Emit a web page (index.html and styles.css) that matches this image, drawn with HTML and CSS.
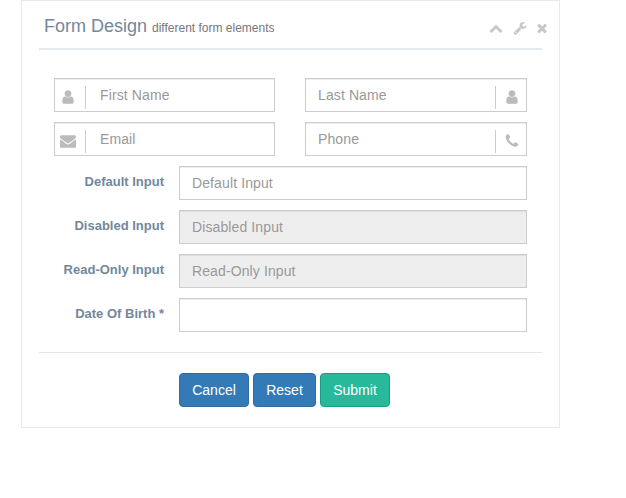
FILE: index.html
```html
<!DOCTYPE html>
<html lang="en">
<head>
<meta charset="utf-8">
<title>Form Design</title>
<link rel="stylesheet" href="styles.css">
</head>
<body>
<svg class="sprite" aria-hidden="true">
  <symbol id="user" viewBox="0 0 1792 1792"><path d="M1536 1399q0 109-62.5 187t-150.5 78h-854q-88 0-150.5-78t-62.5-187q0-85 8.5-160.5t31.5-152 58.5-131 94-89 134.5-34.5q131 128 313 128t313-128q76 0 134.5 34.5t94 89 58.5 131 31.5 152 8.5 160.5zm-256-887q0 159-112.5 271.5t-271.5 112.5-271.5-112.5-112.5-271.5 112.5-271.5 271.5-112.5 271.5 112.5 112.5 271.5z"/></symbol>
  <symbol id="envelope" viewBox="0 0 1792 1792"><path d="M1792 710v794q0 66-47 113t-113 47h-1472q-66 0-113-47t-47-113v-794q44 49 101 87 362 246 497 345 57 42 92.5 65.5t94.5 48 110 24.5h2q51 0 110-24.5t94.5-48 92.5-65.5q170-123 498-345 57-39 100-87zm0-294q0 79-49 151t-122 123q-376 261-468 325-10 7-42.5 31t-54 38.5-52 32.5-57.5 27-50 9h-2q-23 0-50-9t-57.5-27-52-32.5-54-38.5-42.5-31q-91-64-262-182.5t-205-142.5q-62-42-117-115.5t-55-136.5q0-78 41.5-130t118.5-52h1472q65 0 112.5 47t47.5 113z"/></symbol>
  <symbol id="phone" viewBox="0 0 1792 1792"><path d="M1600 1240q0 27-10 70.5t-21 68.5q-21 50-122 106-94 51-186 51-27 0-53-3.5t-57.5-12.5-47-14.5-55.5-20.5-49-18q-98-35-175-83-127-79-264-216t-216-264q-48-77-83-175-3-9-18-49t-20.5-55.5-14.5-47-12.5-57.5-3.5-53q0-92 51-186 56-101 106-122 25-11 68.5-21t70.5-10q14 0 21 3 18 6 53 76 11 19 30 54t35 63.5 31 53.5q3 4 17.5 25t21.5 35.5 7 28.5q0 20-28.5 50t-62 55-62 53-28.5 46q0 9 5 22.5t8.5 20.5 14 24 11.5 19q76 137 174 235t235 174q2 1 19 11.5t24 14 20.5 8.5 22.5 5q18 0 46-28.5t53-62 55-62 50-28.5q14 0 28.5 7t35.5 21.5 25 17.5q25 15 53.5 31t63.5 35 54 30q70 35 76 53 3 7 3 21z"/></symbol>
  <symbol id="chevron" viewBox="0 0 1792 1792"><path d="M1683 1331l-166 165q-19 19-45 19t-45-19l-531-531-531 531q-19 19-45 19t-45-19l-166-165q-19-19-19-45.5t19-45.5l742-741q19-19 45-19t45 19l742 741q19 19 19 45.5t-19 45.5z"/></symbol>
  <symbol id="wrench" viewBox="0 0 1792 1792"><path d="M448 1472q0-26-19-45t-45-19-45 19-19 45 19 45 45 19 45-19 19-45zm644-420l-682 682q-37 37-90 37-52 0-91-37l-106-108q-38-36-38-90 0-53 38-91l681-681q39 98 114.5 173.5t173.5 114.5zm634-435q0 39-23 106-47 134-164.5 217.5t-258.5 83.5q-185 0-316.5-131.5t-131.5-316.5 131.5-316.5 316.5-131.5q58 0 121.5 16.5t107.5 46.5q16 11 16 28t-16 28l-293 169v224l193 107q5-3 79-48.5t135.5-81 70.5-35.5q15 0 23.5 10t8.5 25z"/></symbol>
  <symbol id="close" viewBox="0 0 1792 1792"><path d="M1490 1322q0 40-28 68l-136 136q-28 28-68 28t-68-28l-294-294-294 294q-28 28-68 28t-68-28l-136-136q-28-28-28-68t28-68l294-294-294-294q-28-28-28-68t28-68l136-136q28-28 68-28t68 28l294 294 294-294q28-28 68-28t68 28l136 136q28 28 28 68t-28 68l-294 294 294 294q28 28 28 68z"/></symbol>
</svg>
<section class="panel">
  <header class="panel-title">
    <h2>Form Design <small>different form elements</small></h2>
    <div class="toolbox">
      <svg class="tool"><use href="#chevron"/></svg>
      <svg class="tool"><use href="#wrench"/></svg>
      <svg class="tool"><use href="#close"/></svg>
    </div>
  </header>
  <form class="form">
    <div class="pair">
      <div class="field"><input class="control has-left" type="text" placeholder="First Name"><span class="feedback left"><svg><use href="#user"/></svg></span></div>
      <div class="field"><input class="control" type="text" placeholder="Last Name"><span class="feedback right"><svg><use href="#user"/></svg></span></div>
    </div>
    <div class="pair">
      <div class="field"><input class="control has-left" type="text" placeholder="Email"><span class="feedback left"><svg><use href="#envelope"/></svg></span></div>
      <div class="field"><input class="control" type="text" placeholder="Phone"><span class="feedback right"><svg><use href="#phone"/></svg></span></div>
    </div>
    <div class="row"><label for="default">Default Input</label><input id="default" class="control" type="text" placeholder="Default Input"></div>
    <div class="row"><label for="disabled">Disabled Input</label><input id="disabled" class="control" type="text" placeholder="Disabled Input" disabled></div>
    <div class="row"><label for="readonly">Read-Only Input</label><input id="readonly" class="control" type="text" placeholder="Read-Only Input" readonly></div>
    <div class="row"><label for="birth">Date Of Birth *</label><input id="birth" class="control" type="text"></div>
  </form>
  <div class="actions">
    <button class="btn" type="button">Cancel</button>
    <button class="btn reset" type="reset">Reset</button>
    <button class="btn success" type="submit">Submit</button>
  </div>
</section>
</body>
</html>
```

FILE: styles.css
```css
* { box-sizing: border-box; }
body {
  margin: 0;
  background: #fff;
  color: #73879c;
  font: 13px/18px "Liberation Sans", Arial, sans-serif;
}
.sprite { display: none; }
.panel {
  width: 539px;
  height: 428px;
  margin-left: 21px;
  padding: 0 17px;
  border: 1px solid #e6e9ed;
}
.panel-title {
  display: flex;
  justify-content: space-between;
  height: 49px;
  padding: 15px 0 0 5px;
  border-bottom: 2px solid #e6e9ed;
}
h2 { margin: 0; font-size: 18px; font-weight: 400; line-height: 20px; }
h2 small { font-size: 12px; color: #777; }
.toolbox { display: flex; gap: 9px; padding: 4.5px 0 0; margin-right: -6.5px; }
.tool { width: 14px; height: 14px; fill: #c5c7cb; }
.tool:nth-child(2) { margin-left: 1px; }
.tool:nth-child(3) { margin-left: -1px; }
.form {
  display: flex;
  flex-direction: column;
  gap: 10px;
  padding: 28px 15px 20px;
  border-bottom: 1px solid #e5e5e5;
}
.pair { display: grid; grid-template-columns: 221px 222px; gap: 30px; }
.field { position: relative; }
.control {
  display: block;
  width: 100%;
  height: 34px;
  padding: 6px 12px;
  border: 1px solid #ccc;
  border-radius: 0;
  background: #fff;
  box-shadow: inset 0 1px 1px rgba(0, 0, 0, .075);
  color: #555;
  font: 14px/20px "Liberation Sans", Arial, sans-serif;
  letter-spacing: .11px;
}
.control::placeholder { color: #999; opacity: 1; }
.control:disabled, .control:read-only { background: #eee; }
.has-left { padding-left: 45px; }
.feedback {
  position: absolute;
  top: 8px;
  height: 23px;
  display: flex;
  align-items: center;
}
.feedback svg { width: 16px; height: 16px; margin-top: -1px; fill: #bbb; }
.left { left: 0; width: 32px; padding-left: 6.4px; border-right: 1px solid #ccc; }
.right { right: 0; width: 32px; padding-left: 8.4px; border-left: 1px solid #ccc; }
.row { display: grid; grid-template-columns: 110px 348px; column-gap: 15px; }
.row label { padding-top: 7px; text-align: right; font-weight: 700; }
.actions { display: flex; gap: 4px; padding: 20px 0 0 140px; }
.btn {
  width: 70px;
  height: 34px;
  padding: 6px 0;
  border: 1px solid #2e6da4;
  border-radius: 4px;
  background: #337ab7;
  color: #fff;
  font: 14px/20px "Liberation Sans", Arial, sans-serif;
}
.reset { width: 63px; }
.success { border-color: #169f85; background: #26b99a; }
```
